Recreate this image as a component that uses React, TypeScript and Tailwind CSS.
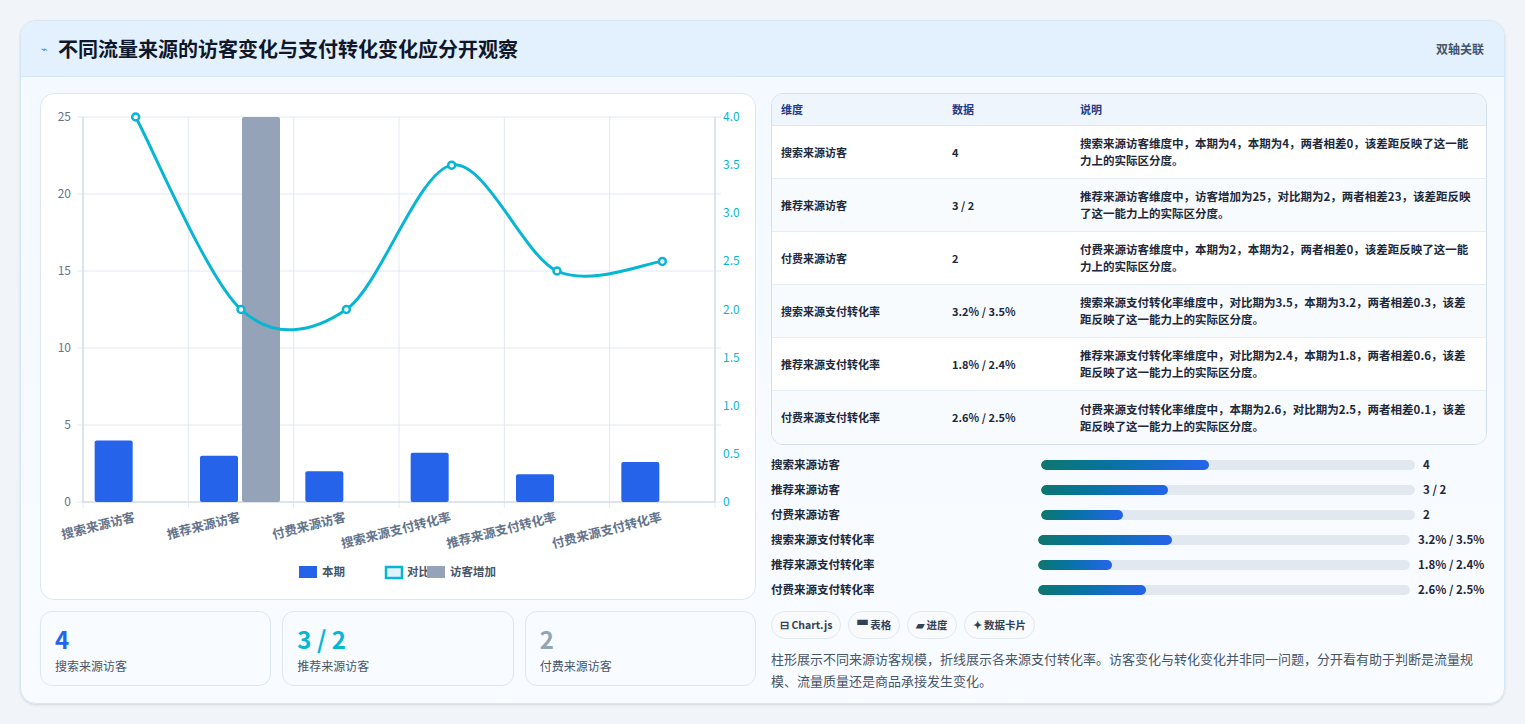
import React from "react";

const cats = ["搜索来源访客", "推荐来源访客", "付费来源访客", "搜索来源支付转化率", "推荐来源支付转化率", "付费来源支付转化率"];
const cur = [4, 3, 2, 3.2, 1.8, 2.6];
const inc = [0, 25, 0, 0, 0, 0];
const rate = [4, 2, 2, 3.5, 2.4, 2.5];
const X0 = 82, X1 = 714, Y0 = 116, Y1 = 501;
const cw = (X1 - X0) / 6;
const cx = (i: number) => X0 + cw * (i + 0.5);
const yl = (v: number) => Y1 - (v / 25) * (Y1 - Y0);
const yr = (v: number) => Y1 - (v / 4) * (Y1 - Y0);

function linePath() {
  const p = rate.map((v, i) => [cx(i), yr(v)]);
  let d = `M${p[0][0]},${p[0][1]}`;
  for (let i = 0; i < p.length - 1; i++) {
    const p0 = p[i - 1] || p[i], p1 = p[i], p2 = p[i + 1], p3 = p[i + 2] || p2;
    const t = 0.32;
    const c1 = [p1[0] + (p2[0] - p0[0]) * t / 2, p1[1] + (p2[1] - p0[1]) * t / 2];
    const c2 = [p2[0] - (p3[0] - p1[0]) * t / 2, p2[1] - (p3[1] - p1[1]) * t / 2];
    d += ` C${c1[0]},${c1[1]} ${c2[0]},${c2[1]} ${p2[0]},${p2[1]}`;
  }
  return d;
}

function Chart() {
  const font = "'Noto Sans CJK SC', sans-serif";
  return (
    <svg viewBox="40 93 715 506" width="715" height="506" className="block" style={{ fontFamily: font }}>
      {[0, 5, 10, 15, 20, 25].map((v) => (
        <g key={v}>
          <line x1={X0 - 6} x2={X1 + 6} y1={yl(v)} y2={yl(v)} stroke="#e2e8f0" strokeWidth="1" />
          <text x={70} y={yl(v) + 4} fontSize="12" fill="#64748b" textAnchor="end">{v}</text>
        </g>
      ))}
      {[0, 0.5, 1, 1.5, 2, 2.5, 3, 3.5, 4].map((v) => (
        <text key={v} x={722} y={yr(v) + 4} fontSize="12" fill="#06b6d4">{v === 0 ? "0" : v.toFixed(1)}</text>
      ))}
      {Array.from({ length: 7 }).map((_, i) => (
        <line key={i} x1={X0 + cw * i} x2={X0 + cw * i} y1={Y0} y2={Y1 + 6} stroke="#e2e8f0" />
      ))}
      <line x1={X0} x2={X0} y1={Y0} y2={Y1} stroke="#cbd5e1" />
      <line x1={X1} x2={X1} y1={Y0} y2={Y1} stroke="#cbd5e1" />
      <line x1={X0} x2={X1} y1={Y1} y2={Y1} stroke="#cbd5e1" />
      {cur.map((v, i) => (
        <rect key={i} x={cx(i) - 41} y={yl(v)} width={38} height={Y1 - yl(v)} fill="#2563eb" rx="2" />
      ))}
      {inc.map((v, i) => v > 0 && (
        <rect key={i} x={cx(i) + 1} y={yl(v)} width={38} height={Y1 - yl(v)} fill="#94a3b8" rx="2" />
      ))}
      <path d={linePath()} fill="none" stroke="#06b6d4" strokeWidth="3" />
      {rate.map((v, i) => (
        <circle key={i} cx={cx(i)} cy={yr(v)} r="3.5" fill="#fff" stroke="#06b6d4" strokeWidth="2.5" />
      ))}
      {cats.map((c, i) => (
        <text key={c} x={cx(i)} y={520} fontSize="12.5" fontWeight="600" fill="#64748b" textAnchor="end" transform={`rotate(-14 ${cx(i)} 520)`}>{c}</text>
      ))}
      <g fontSize="11.5" fill="#475569" fontWeight="600">
        <rect x={298} y={565} width={18} height={12} fill="#2563eb" />
        <text x={321} y={575}>本期</text>
        <rect x={385} y={566} width={16} height={11} fill="#e0f2fe" stroke="#06b6d4" strokeWidth="2.5" />
        <text x={406} y={575}>对比期</text>
        <rect x={426} y={565} width={18} height={12} fill="#94a3b8" />
        <text x={449} y={575}>访客增加</text>
      </g>
    </svg>
  );
}

const rows = [
  ["搜索来源访客", "4", "搜索来源访客维度中，本期为4，本期为4，两者相差0，该差距反映了这一能力上的实际区分度。"],
  ["推荐来源访客", "3 / 2", "推荐来源访客维度中，访客增加为25，对比期为2，两者相差23，该差距反映了这一能力上的实际区分度。"],
  ["付费来源访客", "2", "付费来源访客维度中，本期为2，本期为2，两者相差0，该差距反映了这一能力上的实际区分度。"],
  ["搜索来源支付转化率", "3.2% / 3.5%", "搜索来源支付转化率维度中，对比期为3.5，本期为3.2，两者相差0.3，该差距反映了这一能力上的实际区分度。"],
  ["推荐来源支付转化率", "1.8% / 2.4%", "推荐来源支付转化率维度中，对比期为2.4，本期为1.8，两者相差0.6，该差距反映了这一能力上的实际区分度。"],
  ["付费来源支付转化率", "2.6% / 2.5%", "付费来源支付转化率维度中，本期为2.6，对比期为2.5，两者相差0.1，该差距反映了这一能力上的实际区分度。"],
];
const prog = [
  ["搜索来源访客", "4", 45, 270],
  ["推荐来源访客", "3 / 2", 34, 270],
  ["付费来源访客", "2", 22, 270],
  ["搜索来源支付转化率", "3.2% / 3.5%", 36, 267],
  ["推荐来源支付转化率", "1.8% / 2.4%", 20, 267],
  ["付费来源支付转化率", "2.6% / 2.5%", 29, 267],
] as const;

export default function App() {
  return (
    <div className="w-[1525px] h-[724px] bg-[#f1f5f9] pt-[20px] pl-[20px]" style={{ fontFamily: "'Noto Sans CJK SC', 'Noto Sans', sans-serif" }}>
      <div className="w-[1485px] h-[684px] rounded-[16px] border border-[#d6e6f5] bg-gradient-to-b from-[#f3f9ff] to-[#f9fcff] overflow-hidden shadow-sm">
        <div className="h-[56px] bg-[#e3f0fd] border-b border-[#d3e6f8] flex items-center justify-between px-[20px]">
          <div className="flex items-center gap-[10px]">
            <span className="text-[#3b82f6] text-[11px]">⌁</span>
            <span className="text-[20px] font-bold text-[#0f172a]">不同流量来源的访客变化与支付转化变化应分开观察</span>
          </div>
          <span className="text-[12px] text-[#475569] font-semibold">双轴关联</span>
        </div>
        <div className="flex gap-[15px] pl-[19px] pt-[16px]">
          <div className="w-[716px] flex flex-col gap-[11px]">
            <div className="h-[507px] rounded-[14px] border border-[#dbe7f3] bg-white overflow-hidden">
              <Chart />
            </div>
            <div className="grid grid-cols-3 gap-[11px]">
              {[["4", "text-[#2563eb]", "搜索来源访客"], ["3 / 2", "text-[#06b6d4]", "推荐来源访客"], ["2", "text-[#94a3b8]", "付费来源访客"]].map(([v, c, l]) => (
                <div key={l} className="h-[75px] rounded-[12px] border border-[#dbe7f3] bg-[#f8fbff] px-[14px] pt-[12px]">
                  <div className={`text-[24px] font-bold leading-[30px] ${c}`}>{v}</div>
                  <div className="text-[12px] text-[#475569] mt-[3px]">{l}</div>
                </div>
              ))}
            </div>
          </div>
          <div className="w-[716px] flex flex-col">
            <div className="rounded-[12px] border border-[#d3dfeb] overflow-hidden bg-white text-[11px] text-[#1e293b] font-semibold">
              <div className="grid grid-cols-[171px_128px_1fr] h-[32px] items-center bg-[#eef5fd] text-[#1e3a8a] px-[9px] border-b border-[#dbe7f3]">
                <span>维度</span><span>数据</span><span>说明</span>
              </div>
              {rows.map((r, i) => (
                <div key={i} className={`grid grid-cols-[171px_128px_1fr] h-[53px] items-center px-[9px] ${i < 5 ? "border-b border-[#e5edf5]" : ""} ${i % 2 ? "bg-[#f8fbfe]" : "bg-white"}`}>
                  <span>{r[0]}</span><span>{r[1]}</span><span className="leading-[17px] pr-[4px] text-[11.5px]">{r[2]}</span>
                </div>
              ))}
            </div>
            <div className="flex flex-col mt-[11px] gap-[7px]">
              {prog.map(([l, v, p, w]) => (
                <div key={l} className="flex items-center h-[18px] text-[11.5px] font-semibold text-[#1e293b]">
                  <span style={{ width: w }} className="shrink-0">{l}</span>
                  <div className="flex-1 h-[10px] rounded-full bg-[#e2e8f0] overflow-hidden">
                    <div className="h-full rounded-full bg-gradient-to-r from-[#0f766e] to-[#2563eb]" style={{ width: `${p}%` }} />
                  </div>
                  <span className="shrink-0 pl-[8px]" style={{ width: w === 270 ? 72 : 77 }}>{v}</span>
                </div>
              ))}
            </div>
            <div className="flex gap-[7px] mt-[12px]">
              {["⊟ Chart.js", "▀ 表格", "▰ 进度", "✦ 数据卡片"].map((t) => (
                <span key={t} className="h-[28px] px-[8px] rounded-full border border-[#e2e8f0] bg-[#f8fafc] text-[10.5px] font-semibold text-[#334155] flex items-center">{t}</span>
              ))}
            </div>
            <p className="mt-[9px] text-[13px] leading-[22px] text-[#475569] pr-[10px]">柱形展示不同来源访客规模，折线展示各来源支付转化率。访客变化与转化变化并非同一问题，分开看有助于判断是流量规模、流量质量还是商品承接发生变化。</p>
          </div>
        </div>
      </div>
    </div>
  );
}
